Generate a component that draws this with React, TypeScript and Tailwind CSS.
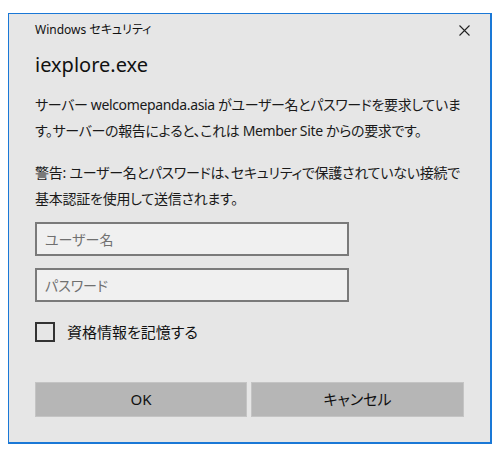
import { useState } from "react";

const font = {
  fontFamily: '"Segoe UI", "Noto Sans", "Noto Sans CJK JP", sans-serif',
};

export default function App() {
  const [remember, setRemember] = useState(false);

  return (
    <div className="min-h-screen bg-white pl-[8px] pt-[13px]" style={font}>
      <div className="flex h-[431px] w-[484px] flex-col border border-r-2 border-b-2 border-[#1a78d6] bg-[#e6e6e6] text-[#000] [font-feature-settings:'palt']">
        {/* title bar */}
        <div className="flex items-center justify-between pl-[26px] pr-[17px] pt-[7px]">
          <span className="text-[12px] leading-[18px] text-[#111]">Windows セキュリティ</span>
          <button className="flex h-[18px] w-[18px] items-center justify-center">
            <svg width="11" height="11" viewBox="0 0 11 11">
              <path d="M0.5 0.5 L10.5 10.5 M10.5 0.5 L0.5 10.5" stroke="#222" strokeWidth="1.1" />
            </svg>
          </button>
        </div>

        <div className="flex flex-col px-[26px]">
          <h1 className="mt-[12px] text-[20px] leading-[28px] text-[#111]">iexplore.exe</h1>

          <p className="mt-[13px] whitespace-nowrap text-[14px] leading-[26px] tracking-[-0.35px] text-[#1a1a1a]">
            サーバー welcomepanda.asia がユーザー名とパスワードを要求していま
            <br />
            す。サーバーの報告によると、これは Member Site からの要求です。
          </p>
          <p className="mt-[16px] whitespace-nowrap text-[14px] leading-[26px] tracking-[-0.25px] text-[#1a1a1a]">
            警告: ユーザー名とパスワードは、セキュリティで保護されていない接続で
            <br />
            基本認証を使用して送信されます。
          </p>

          <input
            className="mt-[10px] h-[34px] w-[314px] border-2 border-[#7a7a7a] bg-[#f0f0f0] px-[8px] text-[14px] text-[#111] outline-none placeholder:text-[#707070]"
            placeholder="ユーザー名"
          />
          <input
            type="password"
            className="mt-[12px] h-[34px] w-[314px] border-2 border-[#7a7a7a] bg-[#f0f0f0] px-[8px] text-[14px] text-[#111] outline-none placeholder:text-[#707070]"
            placeholder="パスワード"
          />

          <label className="mt-[20px] flex cursor-pointer items-center gap-[12px]">
            <span
              onClick={() => setRemember(!remember)}
              className="flex h-[20px] w-[20px] items-center justify-center border-2 border-[#333] bg-[#e6e6e6]"
            >
              {remember && (
                <svg width="12" height="10" viewBox="0 0 12 10">
                  <path d="M1 5 L4.5 8.5 L11 1.5" stroke="#111" strokeWidth="1.5" fill="none" />
                </svg>
              )}
            </span>
            <span className="text-[15px] leading-[20px] text-[#111]">資格情報を記憶する</span>
          </label>

          <div className="mt-[40px] flex gap-[4px]">
            <button className="h-[35px] w-[213px] border border-[#c4c4c4] bg-[#b6b6b6] text-[15px] text-[#111]">
              OK
            </button>
            <button className="h-[35px] w-[214px] border border-[#c4c4c4] bg-[#b6b6b6] text-[15px] text-[#111]">
              キャンセル
            </button>
          </div>
        </div>
      </div>
    </div>
  );
}
